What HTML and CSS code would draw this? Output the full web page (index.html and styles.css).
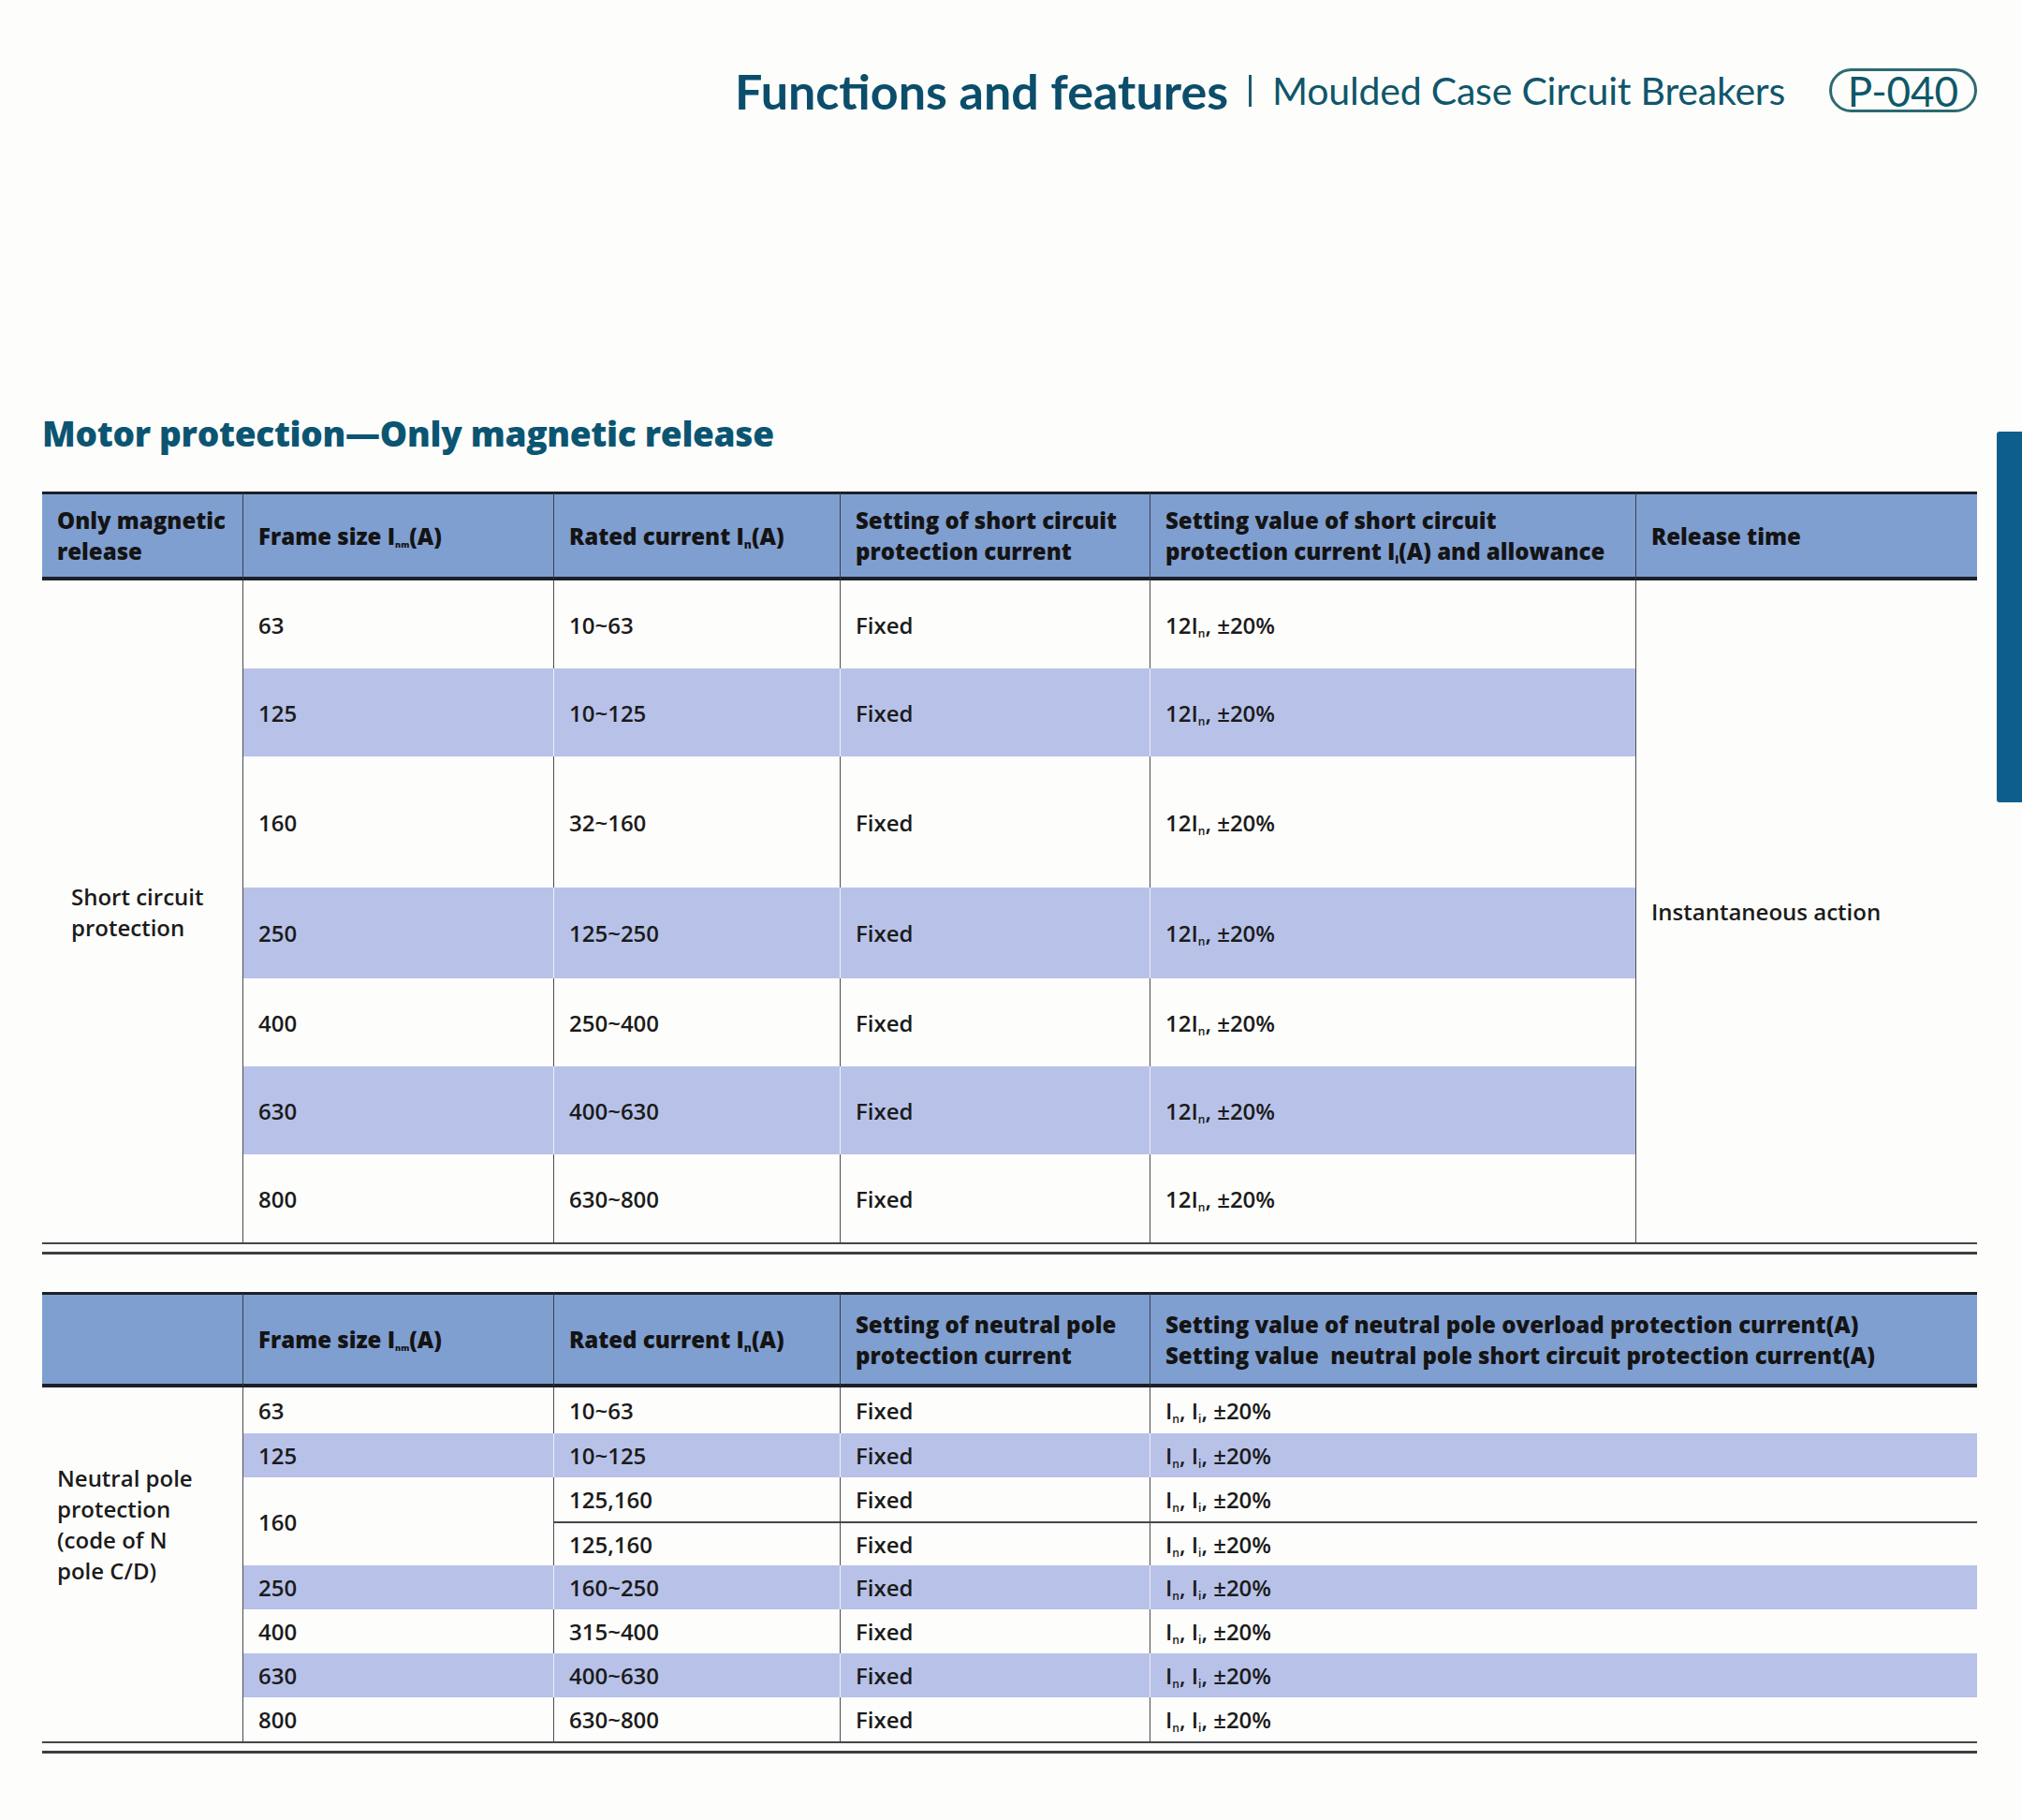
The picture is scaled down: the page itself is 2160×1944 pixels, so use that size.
FILE: index.html
```html
<!DOCTYPE html>
<html lang="en">
<head>
<meta charset="utf-8">
<title>Functions and features – Moulded Case Circuit Breakers</title>
<link rel="stylesheet" href="styles.css">
</head>
<body>
<div class="side-tab"></div>
<div class="page">
  <header class="top">
    <h1 class="top-title">Functions and features</h1>
    <span class="top-sep"></span>
    <span class="top-sub">Moulded Case Circuit Breakers</span>
    <span class="page-no">P-040</span>
  </header>

  <h2 class="section-title">Motor protection—Only magnetic release</h2>

  <table class="spec spec-1">
    <colgroup>
      <col class="c1"><col class="c2"><col class="c3"><col class="c4"><col class="c5"><col class="c6">
    </colgroup>
    <thead>
      <tr>
        <th>Only magnetic<br>release</th>
        <th>Frame size I<sub class="tiny">nm</sub>(A)</th>
        <th>Rated current I<sub>n</sub>(A)</th>
        <th>Setting of short circuit<br>protection current</th>
        <th>Setting value of short circuit<br>protection current I<sub>i</sub>(A) and allowance</th>
        <th>Release time</th>
      </tr>
    </thead>
    <tbody>
      <tr>
        <td rowspan="7" class="group indent">Short circuit<br>protection</td>
        <td class="bl">63</td>
        <td class="bl">10~63</td>
        <td class="bl">Fixed</td>
        <td class="bl">12I<sub>n</sub>, ±20%</td>
        <td rowspan="7" class="bl">Instantaneous action</td>
      </tr>
      <tr>
        <td class="bl s">125</td>
        <td class="bl s g">10~125</td>
        <td class="bl s g">Fixed</td>
        <td class="bl s g">12I<sub>n</sub>, ±20%</td>
      </tr>
      <tr class="tall">
        <td class="bl">160</td>
        <td class="bl">32~160</td>
        <td class="bl">Fixed</td>
        <td class="bl">12I<sub>n</sub>, ±20%</td>
      </tr>
      <tr class="mid">
        <td class="bl s">250</td>
        <td class="bl s g">125~250</td>
        <td class="bl s g">Fixed</td>
        <td class="bl s g">12I<sub>n</sub>, ±20%</td>
      </tr>
      <tr>
        <td class="bl">400</td>
        <td class="bl">250~400</td>
        <td class="bl">Fixed</td>
        <td class="bl">12I<sub>n</sub>, ±20%</td>
      </tr>
      <tr>
        <td class="bl s">630</td>
        <td class="bl s g">400~630</td>
        <td class="bl s g">Fixed</td>
        <td class="bl s g">12I<sub>n</sub>, ±20%</td>
      </tr>
      <tr>
        <td class="bl">800</td>
        <td class="bl">630~800</td>
        <td class="bl">Fixed</td>
        <td class="bl">12I<sub>n</sub>, ±20%</td>
      </tr>
    </tbody>
  </table>
  <div class="end-rule"></div>

  <table class="spec spec-2">
    <colgroup>
      <col class="c1"><col class="c2"><col class="c3"><col class="c4"><col class="c56">
    </colgroup>
    <thead>
      <tr>
        <th></th>
        <th>Frame size I<sub class="tiny">nm</sub>(A)</th>
        <th>Rated current I<sub>n</sub>(A)</th>
        <th>Setting of neutral pole<br>protection current</th>
        <th>Setting value of neutral pole overload protection current(A)<br>Setting value&nbsp; neutral pole short circuit protection current(A)</th>
      </tr>
    </thead>
    <tbody>
      <tr class="first">
        <td rowspan="8" class="group top-text">Neutral pole<br>protection<br>(code of N<br>pole C/D)</td>
        <td class="bl">63</td>
        <td class="bl">10~63</td>
        <td class="bl">Fixed</td>
        <td class="bl">I<sub>n</sub>, I<sub>i</sub>, ±20%</td>
      </tr>
      <tr>
        <td class="bl s">125</td>
        <td class="bl s g">10~125</td>
        <td class="bl s g">Fixed</td>
        <td class="bl s g">I<sub>n</sub>, I<sub>i</sub>, ±20%</td>
      </tr>
      <tr>
        <td rowspan="2" class="bl">160</td>
        <td class="bl">125,160</td>
        <td class="bl">Fixed</td>
        <td class="bl">I<sub>n</sub>, I<sub>i</sub>, ±20%</td>
      </tr>
      <tr class="split">
        <td class="bl">125,160</td>
        <td class="bl">Fixed</td>
        <td class="bl">I<sub>n</sub>, I<sub>i</sub>, ±20%</td>
      </tr>
      <tr>
        <td class="bl s">250</td>
        <td class="bl s g">160~250</td>
        <td class="bl s g">Fixed</td>
        <td class="bl s g">I<sub>n</sub>, I<sub>i</sub>, ±20%</td>
      </tr>
      <tr>
        <td class="bl">400</td>
        <td class="bl">315~400</td>
        <td class="bl">Fixed</td>
        <td class="bl">I<sub>n</sub>, I<sub>i</sub>, ±20%</td>
      </tr>
      <tr>
        <td class="bl s">630</td>
        <td class="bl s g">400~630</td>
        <td class="bl s g">Fixed</td>
        <td class="bl s g">I<sub>n</sub>, I<sub>i</sub>, ±20%</td>
      </tr>
      <tr>
        <td class="bl">800</td>
        <td class="bl">630~800</td>
        <td class="bl">Fixed</td>
        <td class="bl">I<sub>n</sub>, I<sub>i</sub>, ±20%</td>
      </tr>
    </tbody>
  </table>
  <div class="end-rule"></div>
</div>
</body>
</html>
```

FILE: styles.css
```css
* { box-sizing: border-box; }
html, body { margin: 0; padding: 0; }
body {
  background: #fdfdfb;
  font-family: "Open Sans", "Noto Sans", sans-serif;
  color: #1b1b1b;
  width: 2160px;
  min-height: 1944px;
  position: relative;
  overflow: hidden;
}
.side-tab {
  position: absolute;
  top: 461px;
  right: 0;
  width: 27px;
  height: 396px;
  background: #0d5e8d;
  border-radius: 3px 0 0 3px;
}
.page { padding: 73px 48px 0 45px; }

/* top header */
.top {
  display: flex;
  justify-content: flex-end;
  align-items: center;
  height: 47px;
  font-family: Lato, "Open Sans", sans-serif;
  color: #0c4f6c;
}
.top-title {
  margin: 0;
  font-size: 52px;
  font-weight: 700;
  line-height: 1;
  color: #0b4e6b;
}
.top-sep {
  width: 3px;
  height: 34px;
  background: #1d5a6e;
  margin: 0 22px;
}
.top-sub {
  font-size: 41px;
  line-height: 1;
  letter-spacing: -0.2px;
  color: #0f566b;
}
.page-no {
  margin-left: 47px;
  width: 158px;
  height: 47px;
  border: 3px solid #2e6a72;
  border-radius: 24px;
  display: flex;
  align-items: center;
  justify-content: center;
  font-size: 44px;
  line-height: 1;
  color: #0e5868;
}

/* section title */
.section-title {
  margin: 320px 0 39px;
  font-size: 37px;
  line-height: 46px;
  font-weight: 800;
  color: #0b5572;
  letter-spacing: -0.3px;
}

/* tables */
.spec {
  width: 2067px;
  table-layout: fixed;
  border-collapse: separate;
  border-spacing: 0;
  border-bottom: 2px solid #45454a;
}
.c1 { width: 214px; }
.c2 { width: 332px; }
.c3 { width: 306px; }
.c4 { width: 331px; }
.c5 { width: 519px; }
.c6 { width: 365px; }
.c56 { width: 884px; }

.spec th {
  background: #809fd1;
  border-top: 3px solid #1c2028;
  border-bottom: 4px solid #1c2028;
  text-align: left;
  font-weight: 800;
  font-size: 24px;
  line-height: 33px;
  padding: 0 4px 0 16px;
  color: #141414;
  vertical-align: middle;
  white-space: nowrap;
}
.spec th + th { border-left: 1px solid #3a3f4a; }
.spec-1 thead tr { height: 95px; }
.spec-2 thead tr { height: 102px; }

.spec td {
  padding: 0 6px 0 16px;
  font-size: 24px;
  font-weight: 600;
  line-height: 33px;
  vertical-align: middle;
  white-space: nowrap;
  color: #1b1b1b;
}
.spec td.bl { border-left: 1px solid #4d4d52; }
.spec td.s { background: #b8c2e9; }
.spec td.g { border-left-color: #eceef6; }
.spec td.indent { padding-left: 31px; }
.spec td.top-text { vertical-align: top; padding-top: 80px; }

.spec-1 tbody tr { height: 94px; }
.spec-1 tbody tr.tall { height: 140px; }
.spec-1 tbody tr.mid { height: 97px; }

.spec-2 tbody tr { height: 47px; }
.spec-2 tbody tr.first { height: 49px; }
.spec-2 tr.split td { border-top: 2px solid #45454a; }

sub {
  font-size: 0.5em;
  line-height: 0;
  vertical-align: -0.3em;
}
sub.tiny { font-size: 0.38em; }

.end-rule {
  height: 0;
  margin-top: 8px;
  border-top: 3px solid #3e3e42;
}
.spec-1 + .end-rule { margin-bottom: 40px; }
```
